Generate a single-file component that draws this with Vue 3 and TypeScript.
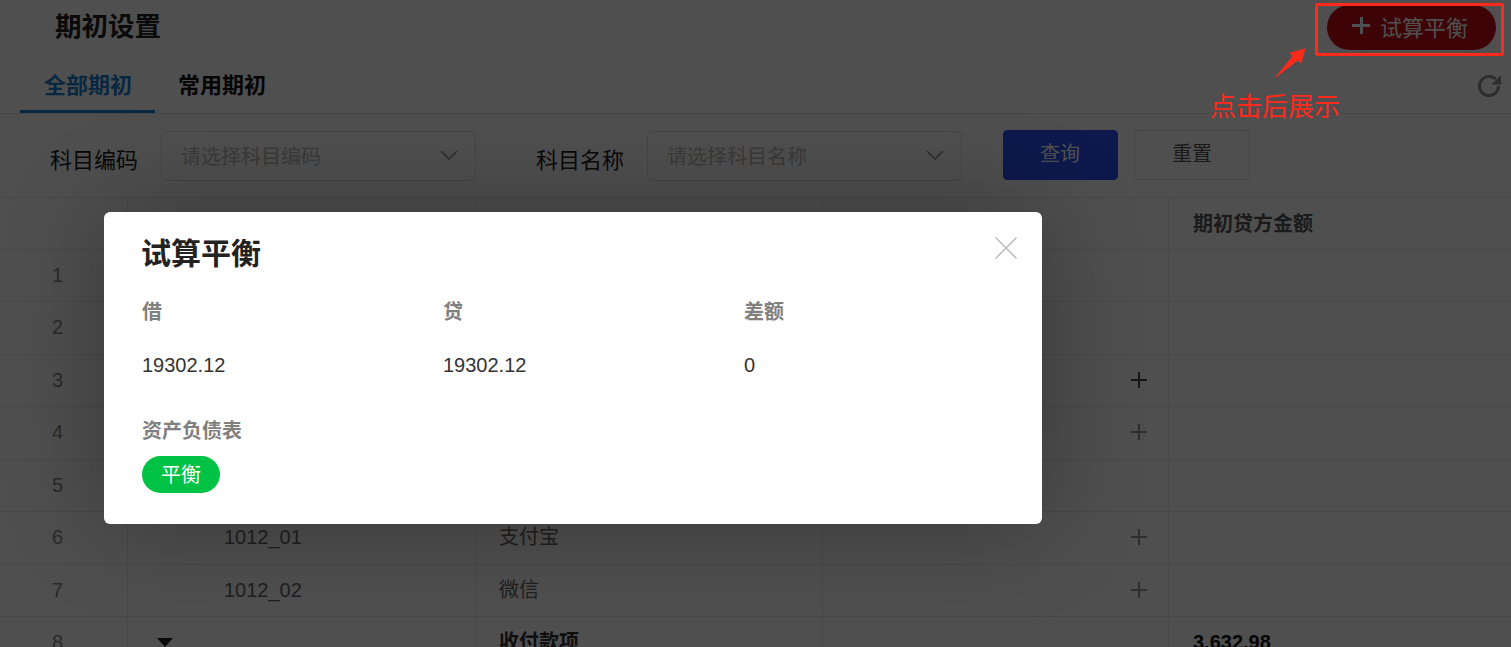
<template>
  <div class="page">
    <header class="head">
      <h1 class="title">期初设置</h1>
      <button class="calc-btn"><i class="calc-plus"></i>试算平衡</button>
    </header>

    <nav class="tabs">
      <a class="tab active">全部期初</a>
      <a class="tab">常用期初</a>
      <svg class="refresh" viewBox="0 0 24 24" width="24" height="24">
        <path d="M20.5 12A9.5 9.5 0 1 1 17.7 5.3" fill="none" stroke="currentColor" stroke-width="3" />
        <path d="M23 1v9.5h-9.5z" fill="currentColor" />
      </svg>
    </nav>

    <form class="filters" @submit.prevent>
      <label class="filter-label">科目编码</label>
      <div class="select">
        <span>请选择科目编码</span>
        <svg class="chevron" viewBox="0 0 18 10" width="18" height="10"><path d="M1 1l8 8 8-8" fill="none" stroke="currentColor" stroke-width="1.5" /></svg>
      </div>
      <label class="filter-label second">科目名称</label>
      <div class="select">
        <span>请选择科目名称</span>
        <svg class="chevron" viewBox="0 0 18 10" width="18" height="10"><path d="M1 1l8 8 8-8" fill="none" stroke="currentColor" stroke-width="1.5" /></svg>
      </div>
      <button class="btn primary">查询</button>
      <button class="btn">重置</button>
    </form>

    <div class="table">
      <div class="row header">
        <div class="cell"></div>
        <div class="cell"></div>
        <div class="cell"></div>
        <div class="cell"></div>
        <div class="cell credit">期初贷方金额</div>
      </div>
      <div v-for="row in rows" :key="row.no" class="row" :class="{ group: row.group }">
        <div class="cell no">{{ row.no }}</div>
        <div class="cell code">
          <i v-if="row.group" class="caret"></i>{{ row.code }}
        </div>
        <div class="cell name">{{ row.name }}</div>
        <div class="cell debit"><span v-if="row.add" class="add" :class="{ dark: row.no === 3 }"></span></div>
        <div class="cell credit">{{ row.credit }}</div>
      </div>
    </div>

    <div class="overlay"></div>

    <section class="modal">
      <svg class="close" viewBox="0 0 22 22" width="22" height="22"><path d="M.5.5l21 21M21.5.5l-21 21" stroke="currentColor" stroke-width="1.5" fill="none" /></svg>
      <h2 class="modal-title">试算平衡</h2>
      <div class="sums">
        <div v-for="item in sums" :key="item.label" class="sum">
          <div class="sum-label">{{ item.label }}</div>
          <div class="sum-value">{{ item.value }}</div>
        </div>
      </div>
      <div class="sum-label">资产负债表</div>
      <span class="pill">平衡</span>
    </section>

    <div class="note-box"></div>
    <svg class="note-arrow" viewBox="0 0 32 31" width="32" height="31">
      <path d="M1 29 L18 8 L15 5 L30 1 L26 15 L23 12 Z" fill="#ff2a1c" stroke="#ff2a1c" stroke-width="0.8" stroke-linejoin="round" />
    </svg>
    <div class="note-text">点击后展示</div>
  </div>
</template>

<script setup lang="ts">
interface Row {
  no: number
  code?: string
  name?: string
  credit?: string
  add?: boolean
  group?: boolean
}

const rows: Row[] = [
  { no: 1 },
  { no: 2 },
  { no: 3, add: true },
  { no: 4, add: true },
  { no: 5 },
  { no: 6, code: '1012_01', name: '支付宝', add: true },
  { no: 7, code: '1012_02', name: '微信', add: true },
  { no: 8, name: '收付款项', credit: '3,632.98', group: true }
]

const sums = [
  { label: '借', value: '19302.12' },
  { label: '贷', value: '19302.12' },
  { label: '差额', value: '0' }
]
</script>

<style>
html,
body {
  margin: 0;
  overflow: hidden;
}
</style>

<style scoped>
.page {
  position: relative;
  height: 647px;
  overflow: hidden;
  background: #fff;
  color: #333;
  font-family: "Liberation Sans", "Noto Sans CJK SC", sans-serif;
}

.head {
  display: flex;
  align-items: flex-start;
  justify-content: space-between;
  height: 63px;
  padding: 5px 15px 0 55px;
  box-sizing: border-box;
}

.title {
  margin: 0;
  font-size: 26.5px;
  line-height: 44px;
  font-weight: 700;
  color: #222;
}

.calc-btn {
  display: flex;
  align-items: center;
  width: 169px;
  height: 45px;
  padding: 0 0 4px 25px;
  box-sizing: border-box;
  border: 0;
  border-radius: 23px;
  background: #c90a18;
  color: #fff;
  font: 22px "Liberation Sans", "Noto Sans CJK SC", sans-serif;
}

.calc-plus {
  flex: none;
  width: 18px;
  height: 17px;
  margin-right: 10px;
  background:
    linear-gradient(#fff, #fff) center / 100% 3px no-repeat,
    linear-gradient(#fff, #fff) center / 3px 100% no-repeat;
}

.tabs {
  display: flex;
  position: relative;
  height: 50px;
  padding-left: 20px;
  border-bottom: 1px solid #e6e6e6;
}

.tab {
  width: 135px;
  box-sizing: border-box;
  height: 50px;
  padding: 7px 0 0 24px;
  font-size: 22px;
  line-height: 32px;
  font-weight: 700;
  color: #111;
}

.tab.active {
  color: #1a7fd0;
  border-bottom: 3px solid #1a7fd0;
  margin-right: -1px;
}

.refresh {
  position: absolute;
  right: 9px;
  top: 11px;
  color: #909090;
}

.filters {
  display: flex;
  align-items: flex-start;
  height: 83px;
  padding: 17px 0 0 50px;
  box-sizing: border-box;
}

.filter-label {
  width: 111px;
  font-size: 22px;
  line-height: 60px;
  color: #222;
}

.filter-label.second {
  margin-left: 60px;
}

.select {
  display: flex;
  align-items: center;
  justify-content: space-between;
  width: 315px;
  height: 50px;
  padding: 0 17px 2px 19px;
  box-sizing: border-box;
  border: 1px solid #ddd;
  border-radius: 6px;
  font-size: 20px;
  color: #bbb;
}

.chevron {
  color: #888;
}

.btn {
  width: 116px;
  height: 50px;
  margin: -1px 0 0 16px;
  padding: 0 0 5px;
  border: 1px solid #ddd;
  border-radius: 4px;
  background: #fff;
  color: #555;
  font: 20px "Liberation Sans", "Noto Sans CJK SC", sans-serif;
}

.btn.primary {
  width: 115px;
  margin-left: 41px;
  padding-right: 1px;
  background: #2a50f5;
  border-color: #2a50f5;
  color: #fff;
}

.row {
  display: grid;
  grid-template-columns: 127px 348px 347px 346px 1fr;
  height: 52.5px;
  box-sizing: border-box;
  border-bottom: 1px solid #e8e8e8;
  font-size: 20px;
  line-height: 51px;
  color: #666;
}

.row.header {
  border-top: 1px solid #e8e8e8;
  line-height: 52px;
}

.cell {
  position: relative;
  box-sizing: border-box;
  height: 100%;
  border-left: 1px solid #e8e8e8;
}

.cell:first-child {
  border-left: 0;
}

.header .credit {
  padding-left: 24px;
  font-weight: 700;
  color: #555;
}

.no {
  padding-left: 52px;
  color: #888;
}

.code {
  padding-left: 96px;
}

.name {
  padding-left: 23px;
}

.credit {
  padding-left: 24px;
}

.group .name,
.group .credit {
  font-weight: 700;
  color: #111;
}

.group .name {
  color: #333;
}

.caret {
  position: absolute;
  left: 29px;
  top: 21px;
  border-left: 8px solid transparent;
  border-right: 8px solid transparent;
  border-top: 9px solid #222;
}

.add {
  position: absolute;
  right: 21px;
  top: 17px;
  width: 16px;
  height: 16px;
  background:
    linear-gradient(#999, #999) center / 100% 2px no-repeat,
    linear-gradient(#999, #999) center / 2px 100% no-repeat;
}

.add.dark {
  background:
    linear-gradient(#4a4a4a, #4a4a4a) center / 100% 2px no-repeat,
    linear-gradient(#4a4a4a, #4a4a4a) center / 2px 100% no-repeat;
}

.overlay {
  position: absolute;
  inset: 0;
  background: rgba(0, 0, 0, 0.69);
}

.modal {
  position: absolute;
  left: 104px;
  top: 212px;
  width: 938px;
  height: 312px;
  padding: 21px 38px 0;
  box-sizing: border-box;
  border-radius: 6px;
  background: #fff;
  box-shadow: 0 0 100px rgba(0, 0, 0, 0.3);
  color: #333;
}

.close {
  position: absolute;
  right: 25px;
  top: 25px;
  color: #bbb;
}

.modal-title {
  margin: 0 0 0 -1px;
  font-size: 30px;
  line-height: 42px;
  font-weight: 700;
  color: #222;
}

.sums {
  display: flex;
  margin-top: 23px;
}

.sum {
  flex: none;
  width: 301px;
}

.sum-label {
  font-size: 20px;
  line-height: 28px;
  font-weight: 700;
  color: #808080;
}

.sum-value {
  margin-top: 25px;
  margin-bottom: 38px;
  font-size: 20px;
  line-height: 28px;
  color: #333;
}

.pill {
  display: inline-block;
  margin-top: 11px;
  width: 78px;
  height: 37px;
  border-radius: 19px;
  background: #00c244;
  color: #fff;
  font-size: 20px;
  line-height: 38px;
  text-align: center;
}

.note-box {
  position: absolute;
  left: 1315px;
  top: 3px;
  width: 189px;
  height: 53px;
  box-sizing: border-box;
  border: 3px solid #ff2a1c;
  border-radius: 2px;
}

.note-arrow {
  position: absolute;
  left: 1275px;
  top: 48px;
}

.note-text {
  position: absolute;
  left: 1210px;
  top: 89px;
  font-size: 26px;
  line-height: 36px;
  color: #ff2a1c;
}
</style>
